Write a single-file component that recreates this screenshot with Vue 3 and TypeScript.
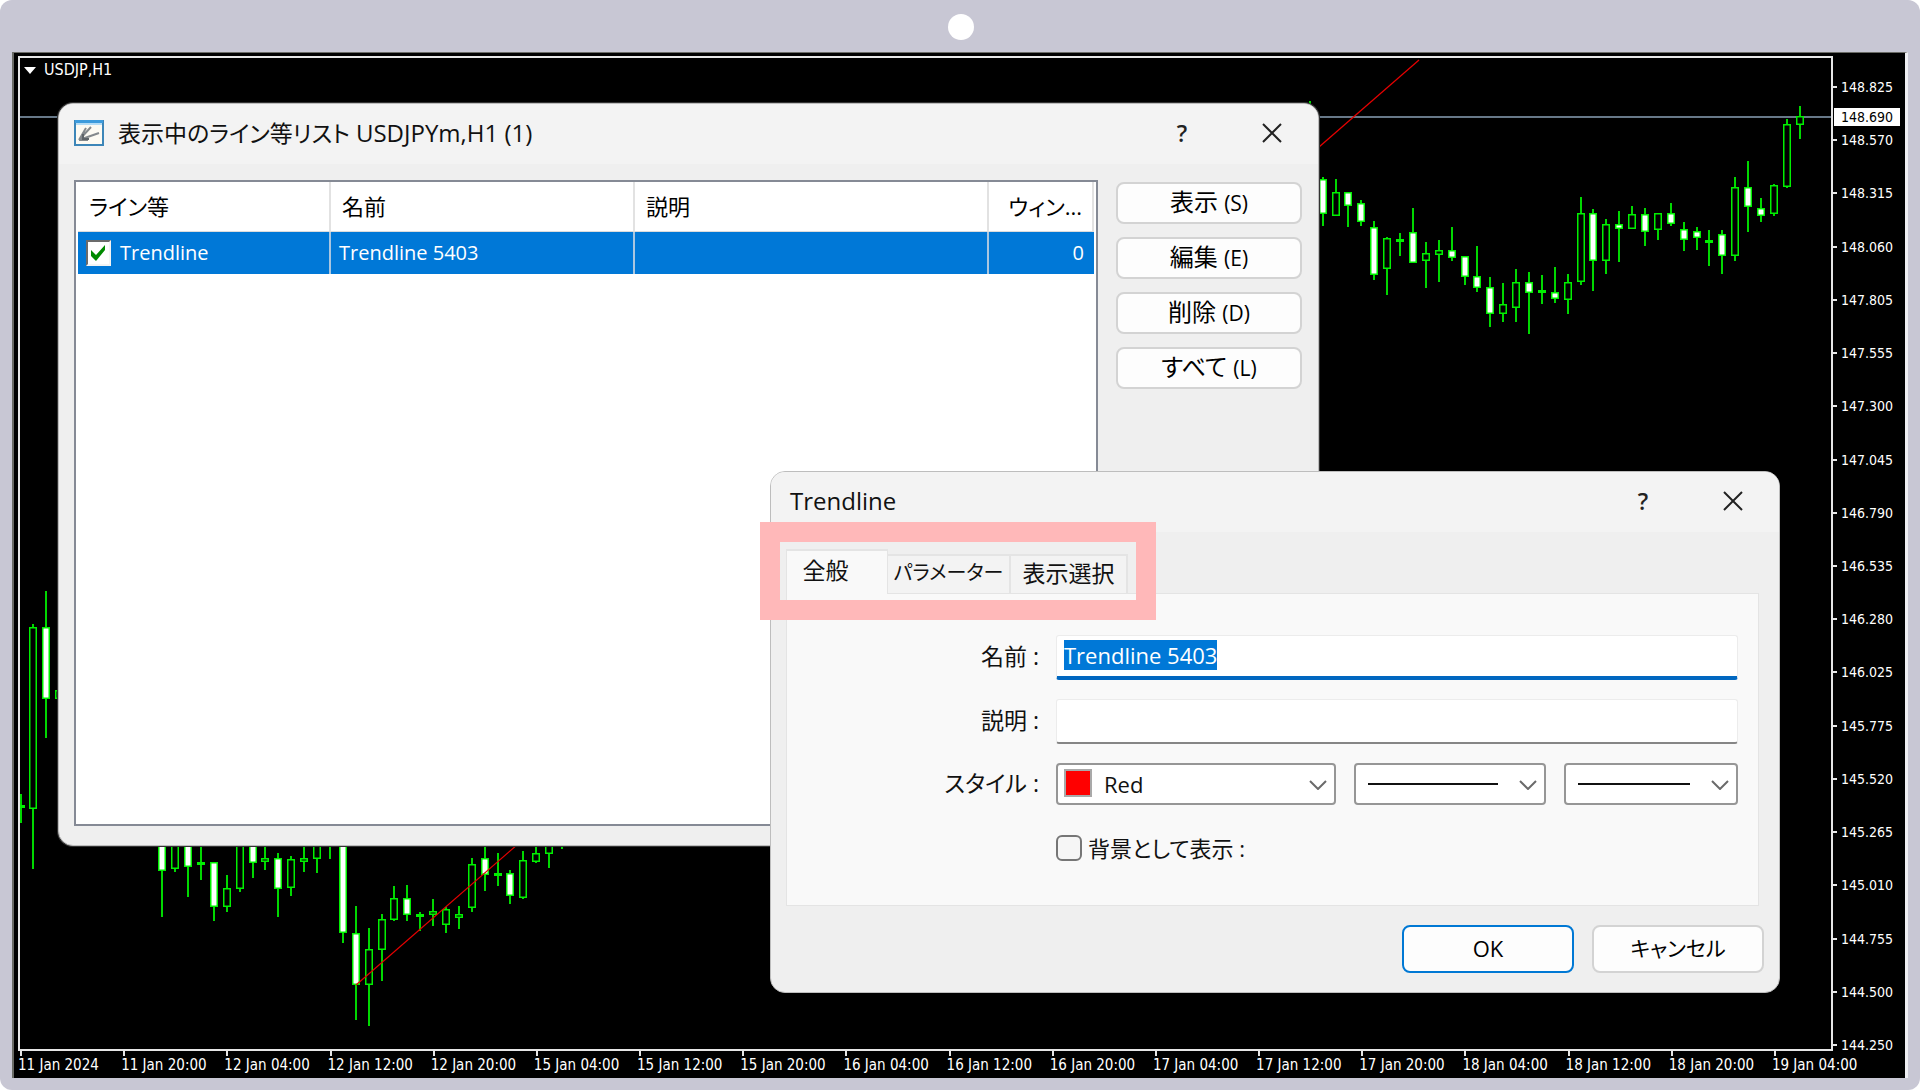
<script setup lang="ts">
import { onMounted, ref } from 'vue'

type Kind = 'up' | 'down' | 'flat'
type Bar = [index: number, high: number, top: number, bottom: number, low: number, kind: Kind]

const bars: Bar[] = [
  [-1, 794, 805, 808, 823, 'flat'],
  [0, 624, 627, 809, 869, 'up'],
  [1, 591, 627, 699, 738, 'down'],
  [2, 690, 690, 699, 699, 'up'],
  [10, 830, 830, 871, 917, 'down'],
  [11, 830, 830, 869, 872, 'up'],
  [12, 830, 830, 867, 897, 'down'],
  [13, 830, 862, 865, 880, 'flat'],
  [14, 862, 862, 907, 921, 'down'],
  [15, 875, 888, 907, 912, 'up'],
  [16, 830, 830, 889, 892, 'up'],
  [17, 830, 830, 863, 878, 'down'],
  [18, 830, 858, 862, 870, 'up'],
  [19, 853, 858, 889, 917, 'down'],
  [20, 856, 859, 888, 896, 'up'],
  [21, 830, 858, 862, 872, 'up'],
  [22, 830, 830, 859, 873, 'up'],
  [23, 820, 820, 830, 859, 'down'],
  [24, 830, 830, 933, 943, 'down'],
  [25, 906, 933, 985, 1020, 'down'],
  [26, 928, 949, 985, 1026, 'up'],
  [27, 914, 919, 950, 981, 'up'],
  [28, 886, 898, 920, 921, 'up'],
  [29, 885, 898, 915, 921, 'down'],
  [30, 912, 914, 917, 931, 'flat'],
  [31, 899, 911, 915, 926, 'up'],
  [32, 907, 909, 925, 933, 'up'],
  [33, 906, 914, 918, 929, 'up'],
  [34, 858, 864, 908, 912, 'up'],
  [35, 830, 858, 875, 891, 'down'],
  [36, 853, 873, 876, 886, 'flat'],
  [37, 870, 873, 896, 904, 'down'],
  [38, 851, 860, 898, 899, 'up'],
  [39, 830, 853, 862, 863, 'up'],
  [40, 830, 830, 854, 868, 'up'],
  [41, 830, 830, 840, 849, 'up'],
  [99, 101, 120, 180, 190, 'down'],
  [100, 177, 179, 214, 226, 'down'],
  [101, 179, 192, 216, 216, 'up'],
  [102, 192, 192, 206, 227, 'down'],
  [103, 200, 203, 222, 226, 'down'],
  [104, 221, 227, 275, 280, 'down'],
  [105, 237, 238, 269, 295, 'up'],
  [106, 233, 239, 242, 256, 'flat'],
  [107, 208, 232, 263, 263, 'down'],
  [108, 242, 253, 261, 288, 'up'],
  [109, 240, 250, 255, 282, 'up'],
  [110, 227, 250, 258, 261, 'down'],
  [111, 256, 256, 277, 285, 'down'],
  [112, 246, 276, 288, 292, 'down'],
  [113, 277, 287, 314, 327, 'down'],
  [114, 283, 304, 314, 322, 'up'],
  [115, 269, 282, 308, 322, 'up'],
  [116, 272, 282, 293, 334, 'down'],
  [117, 275, 290, 293, 304, 'flat'],
  [118, 267, 292, 299, 303, 'down'],
  [119, 274, 282, 300, 314, 'up'],
  [120, 197, 213, 282, 285, 'up'],
  [121, 209, 213, 261, 291, 'down'],
  [122, 219, 224, 261, 274, 'up'],
  [123, 211, 224, 229, 262, 'down'],
  [124, 206, 214, 229, 229, 'up'],
  [125, 208, 214, 232, 246, 'down'],
  [126, 213, 213, 230, 240, 'up'],
  [127, 203, 213, 224, 226, 'down'],
  [128, 222, 229, 240, 251, 'down'],
  [129, 227, 231, 238, 250, 'down'],
  [130, 230, 240, 243, 266, 'flat'],
  [131, 230, 234, 256, 274, 'down'],
  [132, 177, 187, 256, 261, 'up'],
  [133, 161, 187, 207, 232, 'down'],
  [134, 198, 208, 216, 222, 'down'],
  [135, 184, 185, 214, 216, 'up'],
  [136, 119, 124, 187, 188, 'up'],
  [137, 106, 116, 125, 139, 'up'],
]

const FIRST_X = 33.4
const STEP_X = 12.893

const candles = bars.map(([index, high, top, bottom, low, kind]) => ({
  x: Math.round(FIRST_X + index * STEP_X),
  high, top, bottom, low, kind, index,
}))

const prices = [
  '148.825', '148.570', '148.315', '148.060', '147.805', '147.555', '147.300',
  '147.045', '146.790', '146.535', '146.280', '146.025', '145.775', '145.520',
  '145.265', '145.010', '144.755', '144.500', '144.250',
]

const times = [
  '11 Jan 2024', '11 Jan 20:00', '12 Jan 04:00', '12 Jan 12:00', '12 Jan 20:00',
  '15 Jan 04:00', '15 Jan 12:00', '15 Jan 20:00', '16 Jan 04:00', '16 Jan 12:00',
  '16 Jan 20:00', '17 Jan 04:00', '17 Jan 12:00', '17 Jan 20:00', '18 Jan 04:00',
  '18 Jan 12:00', '18 Jan 20:00', '19 Jan 04:00',
]

const actions = [
  { label: '表示', key: '(S)' },
  { label: '編集', key: '(E)' },
  { label: '削除', key: '(D)' },
  { label: 'すべて', key: '(L)' },
]

const tabs = ['全般', 'パラメーター', '表示選択']
const activeTab = ref(0)

const shown = ref(true)
const name = ref('Trendline 5403')
const description = ref('')
const asBackground = ref(false)
const nameInput = ref<HTMLInputElement | null>(null)

onMounted(() => {
  nameInput.value?.focus()
  nameInput.value?.select()
})
</script>

<template>
  <div class="device">
    <span class="camera"></span>
    <main class="screen">
      <section class="plot">
        <svg class="candles" viewBox="20 58 1811 991" preserveAspectRatio="none" aria-hidden="true">
          <rect x="20" y="116" width="1811" height="2" fill="#677888" />
          <g v-for="c in candles" :key="c.index">
            <rect :x="c.x - 1" :y="c.high" width="2" :height="c.low - c.high" fill="#00d800" />
            <rect v-if="c.kind === 'flat'" :x="c.x - 4" :y="c.top" width="8" :height="c.bottom - c.top" fill="#00f000" />
            <rect
              v-else
              :x="c.x - 3.25"
              :y="c.top + 0.75"
              width="6.5"
              :height="Math.max(c.bottom - c.top - 1.5, 1)"
              :fill="c.kind === 'down' ? '#fff' : '#000'"
              stroke="#00f000"
              stroke-width="1.5"
            />
          </g>
          <line x1="356" y1="985" x2="1419" y2="60" stroke="#e60000" stroke-width="1.2" />
        </svg>
        <h1 class="symbol">USDJP,H1</h1>
      </section>
      <div class="price-axis">
        <ul>
          <li v-for="p in prices" :key="p">{{ p }}</li>
        </ul>
        <strong class="current">148.690</strong>
      </div>
      <ul class="time-axis">
        <li v-for="t in times" :key="t">{{ t }}</li>
      </ul>
    </main>

    <section class="window list-window" aria-labelledby="list-title">
      <header class="titlebar">
        <svg class="app-icon" viewBox="0 0 30 26" aria-hidden="true">
          <rect x="1" y="1" width="28" height="24" fill="#fdfaf2" stroke="#3d86b8" stroke-width="2" />
          <rect x="1" y="0" width="28" height="3" fill="#3d9bdc" />
          <rect x="2" y="3" width="26" height="2" fill="#b4dcf5" />
          <path d="M5 20 12 8M5 20 17 7M5 20 25 13M5 20h9" stroke="#85898c" stroke-width="2" fill="none" />
          <path d="M9 14v5h6" stroke="#5f6468" stroke-width="2" fill="none" />
        </svg>
        <h2 id="list-title">表示中のライン等リスト <span>USDJPYm,H1 (1)</span></h2>
        <button class="tool help" type="button">?</button>
        <button class="tool" type="button" aria-label="閉じる">
          <svg viewBox="0 0 20 20" width="20" height="20"><path d="M1 1 19 19M19 1 1 19" stroke="#222" stroke-width="2" /></svg>
        </button>
      </header>
      <div class="list-body">
        <div class="list-frame">
          <table>
            <colgroup><col class="c1" /><col class="c2" /><col class="c3" /><col /></colgroup>
            <thead>
              <tr><th>ライン等</th><th>名前</th><th>説明</th><th class="last">ウィン...</th></tr>
            </thead>
            <tbody>
              <tr>
                <td><label class="line-name"><input v-model="shown" type="checkbox" />Trendline</label></td>
                <td>Trendline 5403</td>
                <td></td>
                <td class="last">0</td>
              </tr>
            </tbody>
          </table>
        </div>
        <div class="actions">
          <button v-for="a in actions" :key="a.key" class="push" type="button">{{ a.label }} <span>{{ a.key }}</span></button>
        </div>
      </div>
    </section>

    <section class="window edit-window" aria-labelledby="edit-title">
      <header class="titlebar">
        <h2 id="edit-title"><span>Trendline</span></h2>
        <button class="tool help" type="button">?</button>
        <button class="tool" type="button" aria-label="閉じる">
          <svg viewBox="0 0 20 20" width="20" height="20"><path d="M1 1 19 19M19 1 1 19" stroke="#222" stroke-width="2" /></svg>
        </button>
      </header>
      <div class="tabs" role="tablist">
        <button
          v-for="(t, i) in tabs"
          :key="t"
          type="button"
          role="tab"
          :aria-selected="activeTab === i"
          :class="{ active: activeTab === i }"
          @click="activeTab = i"
        >{{ t }}</button>
      </div>
      <form class="panel" @submit.prevent>
        <label for="name">名前 :</label>
        <input id="name" ref="nameInput" v-model="name" class="text focused" type="text" />
        <label for="description">説明 :</label>
        <input id="description" v-model="description" class="text" type="text" />
        <label for="color">スタイル :</label>
        <div class="selects">
          <div class="combo combo-color">
            <span class="swatch"></span>
            <select id="color"><option>Red</option></select>
            <svg class="chevron" viewBox="0 0 18 10"><path d="M1 1 9 9 17 1" /></svg>
          </div>
          <div class="combo combo-line">
            <span class="stroke"></span>
            <select aria-label="線種"><option></option></select>
            <svg class="chevron" viewBox="0 0 18 10"><path d="M1 1 9 9 17 1" /></svg>
          </div>
          <div class="combo combo-weight">
            <span class="stroke"></span>
            <select aria-label="太さ"><option></option></select>
            <svg class="chevron" viewBox="0 0 18 10"><path d="M1 1 9 9 17 1" /></svg>
          </div>
        </div>
        <label class="background"><input v-model="asBackground" type="checkbox" />背景として表示 :</label>
      </form>
      <footer class="footer">
        <button class="push primary" type="button">OK</button>
        <button class="push" type="button">キャンセル</button>
      </footer>
      <span class="highlight"></span>
    </section>
  </div>
</template>

<style>
body {
  margin: 0;
  background: #fff;
}
</style>

<style scoped>
* {
  box-sizing: border-box;
}

.device {
  position: relative;
  display: flex;
  min-height: 100vh;
  padding: 52px 12px 12px;
  overflow: hidden;
  border-radius: 12px;
  background: #c8c7d4;
  color: #111;
  font-family: "Open Sans", "Noto Sans CJK JP", sans-serif;
  font-feature-settings: "palt";
}

.camera {
  position: absolute;
  top: 14px;
  left: calc(50% - 12px);
  width: 26px;
  height: 26px;
  border-radius: 50%;
  background: #fff;
}

.screen {
  flex: 1;
  display: grid;
  grid-template-columns: minmax(0, 1fr) 72px;
  grid-template-rows: minmax(0, 1fr) 27px;
  padding: 3px 0 0 4px;
  border: solid #6a6b66;
  border-width: 1px 3px 0 2px;
  border-right-color: #efeff3;
  background: #000;
  color: #fff;
  font-family: "DejaVu Sans Condensed", "Noto Sans", sans-serif;
  font-size: 14px;
  line-height: 18px;
}

.plot {
  position: relative;
  grid-area: 1 / 1;
  border: 2px solid #e6e6e6;
}

.candles {
  position: absolute;
  width: 100%;
  height: 100%;
}

.symbol {
  position: relative;
  display: flex;
  align-items: center;
  gap: 8px;
  margin: 3px 0 0 4px;
  font-size: 16px;
  font-weight: 400;
}

.symbol::before {
  content: "";
  border: solid transparent;
  border-width: 7px 6px 0;
  border-top-color: #fff;
}

ul {
  margin: 0;
  padding: 0;
  list-style: none;
}

.price-axis {
  position: relative;
  grid-area: 1 / 2 / 3 / 3;
}

.price-axis ul {
  display: flex;
  flex-direction: column;
  justify-content: space-between;
  height: 100%;
  padding: 22px 0 24px;
}

.price-axis li {
  display: flex;
  align-items: center;
  gap: 4px;
}

.price-axis li::before {
  content: "";
  width: 4px;
  height: 2px;
  background: #e6e6e6;
}

.current {
  position: absolute;
  top: 52px;
  left: 1px;
  width: 66px;
  padding-left: 7px;
  background: #fff;
  color: #000;
  font-weight: 400;
}

.time-axis {
  grid-area: 2 / 1 / 3 / 3;
  display: flex;
  padding: 0 30px 0 0;
  font-size: 15px;
}

.time-axis li {
  flex: 1;
  min-width: 0;
  white-space: nowrap;
}

.time-axis li::before {
  content: "";
  display: block;
  width: 2px;
  height: 5px;
  margin-left: 2px;
  background: #e6e6e6;
}

.window {
  position: absolute;
  display: flex;
  flex-direction: column;
  border: 1px solid #bdbdbd;
  border-radius: 15px;
  background: #efefef;
}

.list-window {
  top: 103px;
  left: 58px;
  width: 1261px;
  height: 743px;
  box-shadow: 0 0 0 1px #333;
}

.edit-window {
  top: 471px;
  left: 770px;
  width: 1010px;
  height: 522px;
}

.titlebar {
  display: flex;
  align-items: center;
  height: 60px;
  padding: 0 32px 2px 15px;
  border-radius: 14px 14px 0 0;
  background: #f3f3f3;
}

.edit-window .titlebar {
  padding-left: 19px;
}

.app-icon {
  width: 30px;
  height: 26px;
  margin-right: 14px;
}

h2 {
  flex: 1;
  margin: 0;
  font-size: 23px;
  font-weight: 400;
  line-height: 32px;
}

h2 span {
  font-size: 24px;
}

.tool {
  width: 28px;
  height: 32px;
  padding: 0;
  border: 0;
  background: none;
  color: #222;
  font: 600 23px/32px "Open Sans", sans-serif;
}

.tool svg {
  display: block;
  margin: 0 auto;
}

.help {
  margin-right: 62px;
}

.list-body {
  flex: 1;
  display: flex;
  gap: 18px;
  padding: 16px 16px 19px 15px;
}

.list-frame {
  flex: 1;
  border: 2px solid #858a95;
  background: #fff;
}

table {
  width: calc(100% - 4px);
  margin: 0 2px;
  border-collapse: separate;
  border-spacing: 0;
  table-layout: fixed;
}

.c1 { width: 253px; }
.c2 { width: 304px; }
.c3 { width: 354px; }

th {
  height: 50px;
  padding: 0 11px 2px;
  border-right: 2px solid #e2e2e2;
  border-bottom: 1px solid #dcdcdc;
  color: #000;
  font-size: 22px;
  font-weight: 400;
  line-height: 32px;
  text-align: left;
}

td {
  height: 42px;
  padding: 0 8px;
  border-right: 2px solid #a9c6e0;
  background: #0078d7;
  color: #fff;
  font-size: 20px;
  line-height: 32px;
}

.last {
  padding-right: 10px;
  text-align: right;
}

td.last {
  border-right: 0;
}

.line-name {
  display: flex;
  align-items: center;
  gap: 9px;
}

.line-name input {
  appearance: none;
  width: 25px;
  height: 26px;
  margin: 0;
  border: solid;
  border-width: 2px;
  border-color: #6b6b6b #f4f4f4 #f4f4f4 #6b6b6b;
  background: #fff;
}

.line-name input:checked {
  background: #fff url("data:image/svg+xml,%3Csvg xmlns='http://www.w3.org/2000/svg' viewBox='0 0 21 22'%3E%3Cpath d='M3 8v6l5 5 9-11V3L8 13z' fill='%23008a00'/%3E%3C/svg%3E") center / 100% 100%;
}

.actions {
  display: flex;
  flex-direction: column;
  gap: 13px;
  width: 186px;
  padding-top: 2px;
}

.push {
  height: 42px;
  padding: 0 0 2px;
  border: 2px solid #d3d3d3;
  border-radius: 8px;
  background: #fdfdfd;
  color: #000;
  font: inherit;
  font-size: 24px;
  line-height: 32px;
}

.push span {
  font-size: 21px;
}

.tabs {
  position: relative;
  display: flex;
  align-items: flex-end;
  height: 62px;
  padding-left: 15px;
}

.tabs button {
  width: 117px;
  height: 40px;
  padding: 0 0 3px;
  border: solid #e4e4e4;
  border-width: 2px 2px 1px 0;
  background: #f3f3f3;
  color: #111;
  font: inherit;
  font-size: 23px;
  line-height: 32px;
  white-space: nowrap;
}

.tabs button:nth-child(2) {
  width: 123px;
  font-size: 20px;
}

.tabs button.active {
  width: 102px;
  height: 45px;
  padding: 0 23px 6px 0;
  border-width: 2px 1px 0;
  background: #f9f9f9;
}

.panel {
  display: grid;
  grid-template-columns: 252px minmax(0, 1fr);
  align-content: start;
  align-items: center;
  gap: 19px 17px;
  height: 313px;
  margin: -1px 20px 0 15px;
  padding: 41px 20px 0 0;
  border: 1px solid #e4e4e4;
  background: #f9f9f9;
  font-size: 23px;
  line-height: 32px;
}

.panel > label:not(.background) {
  padding-bottom: 3px;
  text-align: right;
}

.text {
  width: 100%;
  height: 45px;
  padding: 0 7px 2px;
  border: 1px solid #ececec;
  border-bottom: 2px solid #868686;
  border-radius: 3px;
  outline: 0;
  background: #fff;
  color: #111;
  font: inherit;
  font-size: 22px;
}

.text.focused {
  border-bottom: 4px solid #0067c0;
}

.text::selection {
  background: #0078d7;
  color: #fff;
}

.selects {
  display: flex;
  gap: 18px;
}

.combo {
  position: relative;
  height: 42px;
}

.combo-color { flex: 280; }
.combo-line { flex: 192; }
.combo-weight { flex: 174; }

.combo select {
  appearance: none;
  width: 100%;
  height: 42px;
  padding: 0 0 0 46px;
  border: 2px solid #969696;
  border-radius: 4px;
  background: #fff;
  color: #111;
  font: inherit;
  font-size: 22px;
}

.swatch {
  position: absolute;
  top: 6px;
  left: 8px;
  width: 28px;
  height: 28px;
  border: 2px solid #a9a9a9;
  background: #f00;
}

.stroke {
  position: absolute;
  top: 20px;
  right: 48px;
  left: 14px;
  height: 2px;
  background: #111;
}

.chevron {
  position: absolute;
  top: 17px;
  right: 9px;
  width: 18px;
  height: 10px;
  fill: none;
  stroke: #6a6a6a;
  stroke-width: 2;
  pointer-events: none;
}

.background {
  grid-column: 2;
  display: flex;
  align-items: center;
  gap: 6px;
  margin-top: 8px;
  font-size: 22px;
}

.background input {
  appearance: none;
  width: 26px;
  height: 26px;
  margin: 0;
  border: 2px solid #767676;
  border-radius: 6px;
  background: #f6f6f6;
}

.background input:checked {
  background: #0067c0;
}

.footer {
  display: flex;
  justify-content: flex-end;
  gap: 18px;
  padding: 19px 15px 0;
}

.footer .push {
  width: 172px;
  height: 48px;
  font-size: 21px;
}

.footer .primary {
  border-color: #0078d4;
  font-size: 22px;
}

.highlight {
  position: absolute;
  top: 50px;
  left: -11px;
  width: 396px;
  height: 98px;
  border: 20px solid #ffb8b9;
  pointer-events: none;
}
</style>
